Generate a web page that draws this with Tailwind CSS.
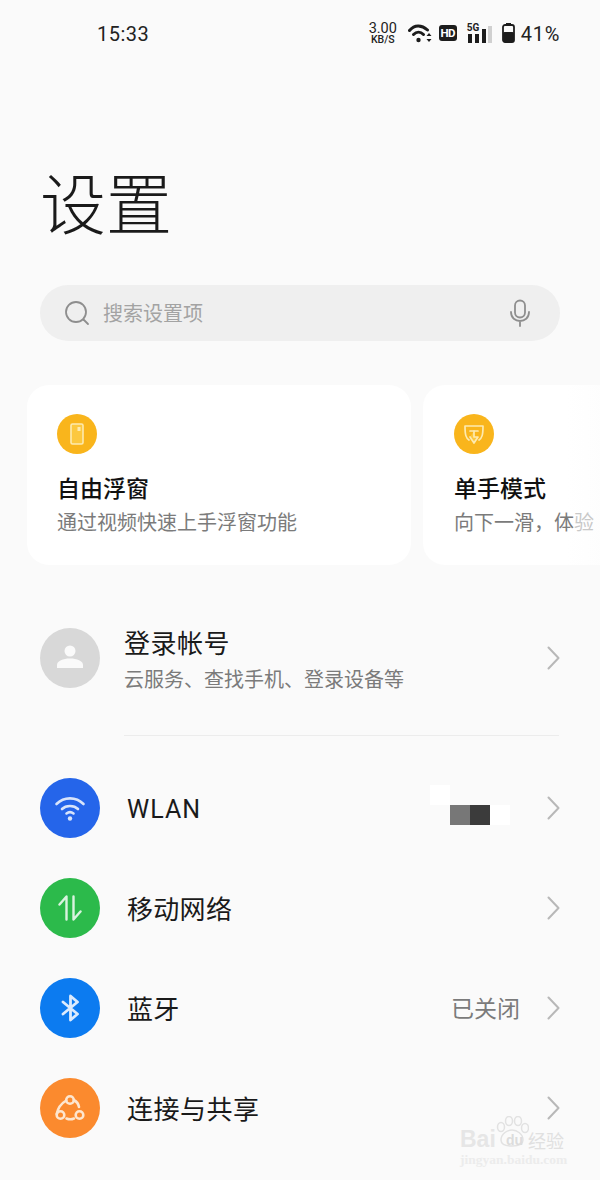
<!DOCTYPE html>
<html lang="zh">
<head>
<meta charset="utf-8">
<script src="https://cdn.jsdelivr.net/npm/@tailwindcss/browser@4"></script>
<title>设置</title>
</head>
<body class="bg-[#fafafa]">
<div class="relative w-[600px] h-[1180px] overflow-hidden bg-[#fafafa] text-[#1a1a1a] font-['Roboto','Noto_Sans_CJK_SC',sans-serif]">

  <!-- Status bar -->
  <div class="h-[66px] flex items-center pl-[97px] pr-[40px]">
    <span class="pt-[2px] text-[20px] tracking-[0.5px] text-[#222]">15:33</span>
    <div class="ml-auto flex items-center">
      <div class="w-[28px] flex flex-col items-center text-[#222] mr-[11px]">
        <span class="text-[14.500px] leading-[13px]">3.00</span>
        <span class="text-[10.500px] leading-[10px] font-medium">KB/S</span>
      </div>
      <svg class="mr-[7px]" width="24" height="19" viewBox="0 0 24 19" fill="none" stroke="#1c1c1c" stroke-width="3" stroke-linecap="round">
        <path d="M1.500 6.500C6.500 0.500 13.500 0.500 19.500 6"/>
        <path d="M5.500 10.500C8.500 7.500 12.500 7.500 15.500 10.500"/>
        <circle cx="10.500" cy="16" r="2.200" fill="#1c1c1c" stroke="none"/>
        <path d="M18.500 12h5l-2.500-3zM18.500 15h5l-2.500 3z" fill="#1c1c1c" stroke="none"/>
      </svg>
      <div class="w-[18px] h-[16px] mr-[10px] rounded-[3px] bg-[#1c1c1c] text-white text-[11.500px] leading-[16px] font-bold text-center tracking-[-0.5px]">HD</div>
      <div class="relative w-[25px] h-[19px] mr-[10px]">
        <span class="absolute left-0 top-[-1px] text-[10px] leading-[10px] font-bold text-[#222]">5G</span>
        <div class="absolute left-[1px] bottom-0 w-[4px] h-[9px] bg-[#1c1c1c]"></div>
        <div class="absolute left-[8px] bottom-0 w-[4px] h-[9px] bg-[#1c1c1c]"></div>
        <div class="absolute left-[15px] bottom-0 w-[4px] h-[14px] bg-[#1c1c1c]"></div>
        <div class="absolute left-[21px] bottom-0 w-[4px] h-[17px] bg-[#d0d0d0]"></div>
      </div>
      <svg class="mr-[6px]" width="13" height="20" viewBox="0 0 13 20">
        <rect x="4" y="0" width="5" height="2" fill="#1c1c1c"/>
        <rect x="1" y="2" width="11" height="17" rx="2" fill="none" stroke="#1c1c1c" stroke-width="1.800"/>
        <rect x="1" y="9" width="11" height="10" rx="1.500" fill="#1c1c1c"/>
      </svg>
      <span class="pt-[2px] text-[20px] tracking-[0.7px] text-[#222]">41%</span>
    </div>
  </div>

  <!-- Title -->
  <h1 class="mt-[96px] ml-[40px] h-[76px] text-[66px] leading-[76px] font-light font-['Noto_Sans_CJK_SC',sans-serif] text-[#1a1a1a]">设置</h1>

  <!-- Search -->
  <div class="mt-[47px] mx-[40px] h-[56px] rounded-full bg-[#efefef] flex items-center pl-[24px] pr-[28px]">
    <svg width="26" height="26" viewBox="0 0 26 26" fill="none" stroke="#8e8e8e" stroke-width="1.800" stroke-linecap="round">
      <circle cx="12" cy="12" r="10"/>
      <path d="M19.500 19.500L24 24"/>
    </svg>
    <span class="ml-[13px] pt-[2px] text-[20px] text-[#a3a3a3]">搜索设置项</span>
    <svg class="ml-auto" width="24" height="28" viewBox="0 0 24 28" fill="none" stroke="#8e8e8e" stroke-width="1.800" stroke-linecap="round">
      <rect x="7" y="1.500" width="10" height="17" rx="5"/>
      <path d="M3 13c0 12 18 12 18 0M12 22v5"/>
    </svg>
  </div>

  <!-- Feature cards -->
  <div class="mt-[44px] ml-[27px] flex gap-[12px] w-[640px]">
    <div class="w-[384px] h-[180px] shrink-0 rounded-[22px] bg-white pt-[29px] pl-[30px]">
      <div class="w-[40px] h-[40px] rounded-full bg-[#f9b51c] flex items-center justify-center">
        <svg width="14" height="22" viewBox="0 0 14 22" fill="#fcc83f" stroke="#fdeab0" stroke-width="1.600">
          <rect x="1" y="1" width="12" height="20" rx="1.500"/>
          <rect x="7.500" y="4" width="3" height="4" fill="#fdeab0" stroke="none"/>
        </svg>
      </div>
      <p class="mt-[15px] text-[23px] leading-[36px] font-medium text-[#111] font-['Noto_Sans_CJK_SC',sans-serif]">自由浮窗</p>
      <p class="text-[20px] leading-[33px] text-[#7b7b7b] font-['Noto_Sans_CJK_SC',sans-serif]">通过视频快速上手浮窗功能</p>
    </div>
    <div class="w-[240px] h-[180px] shrink-0 rounded-l-[22px] bg-linear-to-r from-white from-[60%] to-[#fafafa] pt-[29px] pl-[31px]">
      <div class="w-[40px] h-[40px] rounded-full bg-[#f9b51c] flex items-center justify-center">
        <svg width="22" height="22" viewBox="0 0 22 22" fill="none" stroke="#fdeab0" stroke-width="1.700" stroke-linecap="round" stroke-linejoin="round">
          <path d="M6 17C3 15 2 12 2 3h18c0 9-1 12-4 14"/>
          <path d="M7 8h8"/>
          <path d="M11 8v6h4l-4 6-4-6" fill="#fcc83f"/>
        </svg>
      </div>
      <p class="mt-[15px] text-[23px] leading-[36px] font-medium text-[#111] font-['Noto_Sans_CJK_SC',sans-serif]">单手模式</p>
      <p class="w-[140px] h-[33px] overflow-hidden whitespace-nowrap text-[20px] leading-[33px] text-[#7b7b7b] font-['Noto_Sans_CJK_SC',sans-serif]">向下一滑，体<span class="text-[#c8c8c8]">验</span></p>
    </div>
  </div>

  <!-- Account -->
  <div class="mt-[59px] mx-[40px] h-[68px] flex items-start">
    <div class="mt-[4px] w-[60px] h-[60px] rounded-full bg-[#d8d8d8] flex items-center justify-center">
      <svg width="28" height="28" viewBox="0 0 28 28" fill="#fafafa">
        <circle cx="14" cy="7" r="5.500"/>
        <path d="M1 24v-3c0-4 6-6.500 13-6.500S27 17 27 21v3z"/>
      </svg>
    </div>
    <div class="ml-[24px] font-['Noto_Sans_CJK_SC',sans-serif]">
      <p class="text-[26px] leading-[35px] tracking-[0.5px] text-[#1a1a1a]">登录帐号</p>
      <p class="text-[20px] leading-[39px] text-[#7b7b7b]">云服务、查找手机、登录设备等</p>
    </div>
    <svg class="ml-auto self-center" width="13" height="24" viewBox="0 0 13 24" fill="none" stroke="#b8b8b8" stroke-width="2" stroke-linecap="round" stroke-linejoin="round"><path d="M1.500 1.500L11.500 12L1.500 22.500"/></svg>
  </div>

  <div class="mt-[43px] ml-[124px] mr-[41px] h-px bg-[#ececec]"></div>

  <!-- Settings list -->
  <div class="mt-[22px] ml-[40px] mr-[40px]">
    <div class="relative h-[100px] flex items-center">
      <div class="w-[60px] h-[60px] rounded-full bg-[#2565ea] flex items-center justify-center">
        <svg width="32" height="26" viewBox="0 0 32 26" fill="none" stroke="#d8e4fb" stroke-width="2.600" stroke-linecap="round">
          <path d="M2.500 9C10 1.500 22 1.500 29.500 9"/>
          <path d="M8 14C12 10 20 10 24 14"/>
          <path d="M12.500 18.500C14.500 17 17.500 17 19.500 18.500"/>
          <circle cx="16" cy="23.500" r="2.200" fill="#d8e4fb" stroke="none"/>
        </svg>
      </div>
      <span class="ml-[27px] pt-[4px] text-[25px] tracking-[1px] text-[#1a1a1a]">WLAN</span>
      <div class="absolute left-[390px] top-[27px] w-[20px] h-[20px] bg-white"></div>
      <div class="absolute left-[410px] top-[47px] flex">
        <div class="w-[20px] h-[20px] bg-[#777]"></div>
        <div class="w-[20px] h-[20px] bg-[#3b3b3b]"></div>
        <div class="w-[20px] h-[20px] bg-white"></div>
      </div>
      <svg class="ml-auto" width="13" height="24" viewBox="0 0 13 24" fill="none" stroke="#b8b8b8" stroke-width="2" stroke-linecap="round" stroke-linejoin="round"><path d="M1.500 1.500L11.500 12L1.500 22.500"/></svg>
    </div>

    <div class="h-[100px] flex items-center">
      <div class="w-[60px] h-[60px] rounded-full bg-[#2cba4b] flex items-center justify-center">
        <svg width="24" height="26" viewBox="0 0 24 26" fill="none" stroke="#d9f3df" stroke-width="2.400" stroke-linecap="round" stroke-linejoin="round">
          <path d="M1.500 9.500L8.500 1.500V24.500"/>
          <path d="M22.500 16.500L15.500 24.500V1.500"/>
        </svg>
      </div>
      <span class="ml-[27px] pb-[2px] text-[26px] tracking-[0.3px] text-[#1a1a1a] font-['Noto_Sans_CJK_SC',sans-serif]">移动网络</span>
      <svg class="ml-auto" width="13" height="24" viewBox="0 0 13 24" fill="none" stroke="#b8b8b8" stroke-width="2" stroke-linecap="round" stroke-linejoin="round"><path d="M1.500 1.500L11.500 12L1.500 22.500"/></svg>
    </div>

    <div class="h-[100px] flex items-center">
      <div class="w-[60px] h-[60px] rounded-full bg-[#0c7bf0] flex items-center justify-center">
        <svg width="19" height="28" viewBox="0 0 19 28" fill="none" stroke="#dcebfd" stroke-width="2.800" stroke-linejoin="round" stroke-linecap="round">
          <path d="M2 8L16.500 20L9.500 26V2L16.500 8L2 20"/>
        </svg>
      </div>
      <span class="ml-[27px] pb-[2px] text-[26px] tracking-[0.3px] text-[#1a1a1a] font-['Noto_Sans_CJK_SC',sans-serif]">蓝牙</span>
      <span class="ml-auto mr-[27px] pb-[2px] text-[23px] text-[#7b7b7b] font-['Noto_Sans_CJK_SC',sans-serif]">已关闭</span>
      <svg width="13" height="24" viewBox="0 0 13 24" fill="none" stroke="#b8b8b8" stroke-width="2" stroke-linecap="round" stroke-linejoin="round"><path d="M1.500 1.500L11.500 12L1.500 22.500"/></svg>
    </div>

    <div class="h-[100px] flex items-center">
      <div class="w-[60px] h-[60px] rounded-full bg-[#fb8a2e] flex items-center justify-center">
        <svg width="30" height="28" viewBox="0 0 30 28" fill="none" stroke="#fde6cf" stroke-width="2.600" stroke-linecap="round">
          <circle cx="15" cy="6" r="3.800"/>
          <circle cx="5.500" cy="21" r="3.800"/>
          <circle cx="24.500" cy="21" r="3.800"/>
          <path d="M11.200 6.500C7 9 3 13 1.700 20M18.800 6C21.500 7.500 23.500 10 24 13M11.500 24.500C14 25.500 16.500 25.500 19 24.500"/>
        </svg>
      </div>
      <span class="ml-[27px] pb-[2px] text-[26px] tracking-[0.5px] text-[#1a1a1a] font-['Noto_Sans_CJK_SC',sans-serif]">连接与共享</span>
      <svg class="ml-auto" width="13" height="24" viewBox="0 0 13 24" fill="none" stroke="#b8b8b8" stroke-width="2" stroke-linecap="round" stroke-linejoin="round"><path d="M1.500 1.500L11.500 12L1.500 22.500"/></svg>
    </div>
  </div>

  <!-- Watermark -->
  <div class="absolute left-[460px] top-[1114px] w-[110px] h-[56px]">
    <svg class="absolute left-[36px] top-[2px]" width="33" height="32" viewBox="0 0 33 32" fill="#fafafa" stroke="#e2e2e2" stroke-width="1.500">
      <ellipse cx="5" cy="11" rx="3.500" ry="4.500"/>
      <ellipse cx="13" cy="5" rx="3.500" ry="4.500"/>
      <ellipse cx="22" cy="5" rx="3.500" ry="4.500"/>
      <ellipse cx="29" cy="12" rx="3.500" ry="4.500"/>
      <path d="M5 24c0-6 6-10 11-10s11 4 11 10c0 5-6 6-11 6s-11-1-11-6z"/>
    </svg>
    <span class="absolute left-0 top-[12px] text-[23px] leading-[26px] font-bold text-[#e6e6e6] font-['Liberation_Sans',sans-serif]">Bai</span>
    <span class="absolute left-[46px] top-[18px] text-[14px] leading-[16px] font-bold text-[#dcdcdc] font-['Liberation_Sans',sans-serif]">du</span>
    <span class="absolute left-[68px] top-[15px] text-[18px] leading-[22px] text-[#e0e0e0] font-['Noto_Sans_CJK_SC',sans-serif]">经验</span>
    <span class="absolute left-0 top-[38px] text-[13.500px] leading-[16px] font-bold text-[#ececec] font-['Liberation_Serif',serif]">jingyan.baidu.com</span>
  </div>
</div>
</body>
</html>
